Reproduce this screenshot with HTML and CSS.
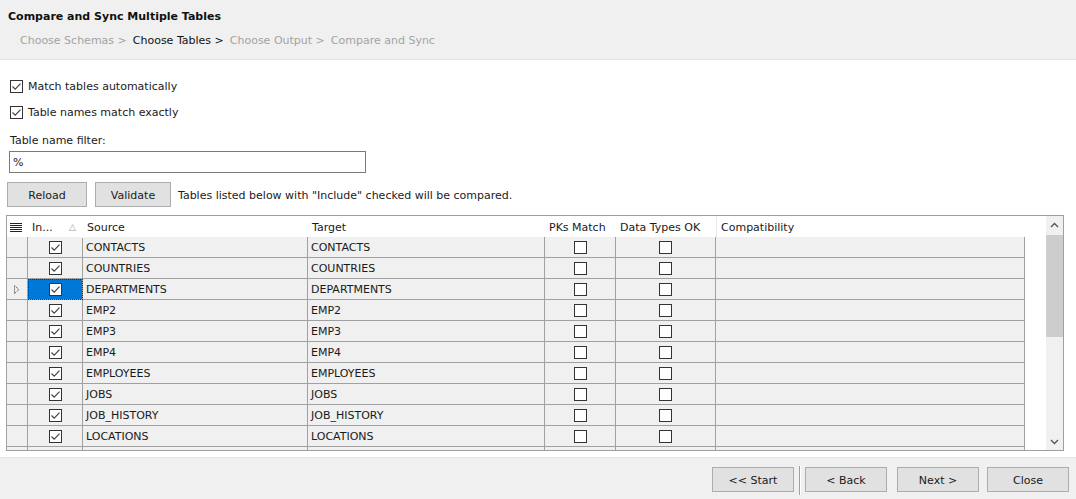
FILE: index.html
```html
<!DOCTYPE html>
<html>
<head>
<meta charset="utf-8">
<link rel="stylesheet" href="styles.css">
</head>
<body>
<div class="app">
  <header class="wiz-head">
    <div class="wiz-title">Compare and Sync Multiple Tables</div>
    <div class="crumbs">
      <span class="crumb">Choose Schemas &gt;</span>
      <span class="crumb active">Choose Tables &gt;</span>
      <span class="crumb">Choose Output &gt;</span>
      <span class="crumb">Compare and Sync</span>
    </div>
  </header>

  <main class="wiz-body">
    <label class="opt"><span class="cb checked"><svg viewBox="0 0 13 13"><path d="M2.5 6.5 L5.2 9.2 L10.5 3.6" /></svg></span>Match tables automatically</label>
    <label class="opt"><span class="cb checked"><svg viewBox="0 0 13 13"><path d="M2.5 6.5 L5.2 9.2 L10.5 3.6" /></svg></span>Table names match exactly</label>
    <div class="filter-label">Table name filter:</div>
    <div class="filter-input">%</div>
    <div class="actions">
      <button class="btn btn-reload">Reload</button>
      <button class="btn btn-validate">Validate</button>
      <span class="hint">Tables listed below with "Include" checked will be compared.</span>
    </div>

    <div class="grid">
      <div class="grid-main">
        <div class="grid-row grid-headrow">
          <div class="hc hc-icon"><svg viewBox="0 0 12 9" width="12" height="9"><path d="M0 0.5H12M0 2.5H12M0 4.5H12M0 6.5H12M0 8.5H12" stroke="#222" stroke-width="1"/></svg></div>
          <div class="hc hc-inc">In...<span class="sort">△</span></div>
          <div class="hc">Source</div>
          <div class="hc">Target</div>
          <div class="hc">PKs Match</div>
          <div class="hc">Data Types OK</div>
          <div class="hc hc-compat">Compatibility</div>
        </div>
        <div class="grid-rows" id="rows"></div>
      </div>
      <div class="vscroll">
        <div class="sb-arrow"><svg viewBox="0 0 9 6" width="9" height="6"><path d="M1 5 L4.5 1.5 L8 5" fill="none" stroke="#555" stroke-width="1.4"/></svg></div>
        <div class="sb-track"><div class="sb-thumb"></div></div>
        <div class="sb-arrow"><svg viewBox="0 0 9 6" width="9" height="6"><path d="M1 1 L4.5 4.5 L8 1" fill="none" stroke="#555" stroke-width="1.4"/></svg></div>
      </div>
    </div>
  </main>

  <footer class="wiz-foot">
    <button class="btn fbtn">&lt;&lt; Start</button>
    <span class="vsep"></span>
    <button class="btn fbtn">&lt; Back</button>
    <button class="btn fbtn btn-next">Next &gt;</button>
    <button class="btn fbtn">Close</button>
  </footer>
</div>
<script>
  var names = ["CONTACTS","COUNTRIES","DEPARTMENTS","EMP2","EMP3","EMP4","EMPLOYEES","JOBS","JOB_HISTORY","LOCATIONS",""];
  var check = '<span class="cb checked"><svg viewBox="0 0 13 13"><path d="M2.5 6.5 L5.2 9.2 L10.5 3.6" /></svg></span>';
  var empty = '<span class="cb"></span>';
  var html = "";
  names.forEach(function (n, i) {
    var sel = n === "DEPARTMENTS";
    var filler = n === "";
    html += '<div class="grid-row">' +
      '<div class="c c-rh">' + (sel ? '<svg class="cur" viewBox="0 0 6 9" width="6" height="9"><path d="M0.5 0.5 L5 4.5 L0.5 8.5 Z" fill="none" stroke="#333" stroke-width="1" stroke-dasharray="1 1"/></svg>' : '') + '</div>' +
      '<div class="c c-ctr' + (sel ? ' c-sel' : '') + '">' + (filler ? '' : check) + '</div>' +
      '<div class="c">' + n + '</div>' +
      '<div class="c">' + n + '</div>' +
      '<div class="c c-ctr">' + (filler ? '' : empty) + '</div>' +
      '<div class="c c-ctr">' + (filler ? '' : empty) + '</div>' +
      '<div class="c"></div>' +
      '</div>';
  });
  document.getElementById("rows").innerHTML = html;
</script>
</body>
</html>
```

FILE: styles.css
```css
* { box-sizing: border-box; }
html, body { margin: 0; padding: 0; }
body {
  font-family: "DejaVu Sans", "Liberation Sans", sans-serif;
  font-size: 11px;
  color: #1a1a1a;
  background: #fff;
}
.app {
  width: 1076px;
  height: 499px;
  display: flex;
  flex-direction: column;
  overflow: hidden;
}

/* header */
.wiz-head {
  height: 60px;
  background: #f0f0f0;
  border-bottom: 1px solid #e2e2e2;
  padding: 10px 0 0 8px;
}
.wiz-title {
  font-weight: bold;
  font-size: 11px;
  color: #111;
  line-height: 14px;
}
.crumbs {
  margin-top: 10px;
  padding-left: 12px;
  line-height: 14px;
  color: #a3a3a3;
  display: flex;
  gap: 6px;
}
.crumb.active { color: #111; }

/* body */
.wiz-body {
  flex: 1;
  background: #fff;
  padding: 13px 0 6px 6px;
  display: flex;
  flex-direction: column;
}
.opt {
  height: 26px;
  display: flex;
  align-items: center;
  padding-left: 4px;
  gap: 5px;
}
.cb {
  width: 13px;
  height: 13px;
  border: 1px solid #333;
  background: #fff;
  display: inline-block;
  flex: none;
  position: relative;
}
.cb svg {
  position: absolute;
  left: -1px;
  top: -1px;
  width: 13px;
  height: 13px;
}
.cb svg path {
  fill: none;
  stroke: #444;
  stroke-width: 1.2;
}
.filter-label {
  height: 16px;
  line-height: 16px;
  margin-top: 8px;
  padding-left: 4px;
}
.filter-input {
  margin-top: 2px;
  margin-left: 3px;
  width: 357px;
  height: 22px;
  border: 1px solid #7a7a7a;
  padding: 4px 3px 2px;
  line-height: 14px;
  background: #fff;
}
.actions {
  margin-top: 9px;
  height: 25px;
  display: flex;
  align-items: center;
  margin-left: 1px;
}
.btn {
  font-family: inherit;
  font-size: 11px;
  color: #1a1a1a;
  background: #e1e1e1;
  border: 1px solid #adadad;
  height: 25px;
  padding: 1px 0 0;
  margin: 0;
}
.btn-reload { width: 80px; }
.btn-validate { width: 76px; margin-left: 8px; }
.hint { margin-left: 7px; padding-top: 2px; }

/* grid */
.grid {
  margin-top: 8px;
  width: 1058px;
  height: 236px;
  border: 1px solid #a0a0a0;
  display: flex;
  background: #fff;
}
.grid-main {
  flex: 1;
  overflow: hidden;
}
.grid-row {
  display: grid;
  grid-template-columns: 21px 55px 225px 237px 71px 100px 309px;
  width: 1018px;
  height: 21px;
}
.grid-headrow { background: #fff; }
.hc {
  line-height: 21px;
  padding: 1px 0 0 4px;
  white-space: nowrap;
  border-right: 1px solid #fff;
  color: #1a1a1a;
}
.hc-icon {
  display: flex;
  align-items: center;
  padding: 0 0 0 3px;
}
.hc-inc { position: relative; }
.sort {
  position: absolute;
  left: 41px;
  top: 1px;
  color: #999;
  font-size: 9px;
}
.hc-compat { border-left: 1px solid #e6e6e6; }
.c {
  background: #f0f0f0;
  border-right: 1px solid #a0a0a0;
  border-bottom: 1px solid #a0a0a0;
  line-height: 20px;
  padding: 1px 0 0 3px;
  white-space: nowrap;
  overflow: hidden;
}
.c-ctr {
  display: flex;
  align-items: center;
  justify-content: center;
  padding: 0;
}
.c-rh {
  display: flex;
  align-items: center;
  padding: 0 0 0 7px;
}
.c-sel {
  background: #0078d7;
  outline: 1px dotted #333;
  outline-offset: -1px;
}

/* scrollbar */
.vscroll {
  width: 17px;
  background: #f0f0f0;
  display: flex;
  flex-direction: column;
  margin-left: 21px;
}
.sb-arrow {
  height: 17px;
  display: flex;
  align-items: center;
  justify-content: center;
  flex: none;
}
.sb-track {
  flex: 1;
  padding: 2px 0 0 0;
}
.sb-thumb {
  height: 102px;
  background: #cdcdcd;
}

/* footer */
.wiz-foot {
  height: 42px;
  background: #f0f0f0;
  border-top: 1px solid #e2e2e2;
  display: flex;
  align-items: flex-start;
  justify-content: flex-end;
  padding: 9px 7px 0 0;
}
.fbtn { width: 82px; }
.vsep {
  width: 2px;
  height: 29px;
  margin: -1px 4px 0 5px;
  border-left: 1px solid #a0a0a0;
  border-right: 1px solid #fff;
}
.btn-next { margin-left: 10px; margin-right: 8px; }
```
